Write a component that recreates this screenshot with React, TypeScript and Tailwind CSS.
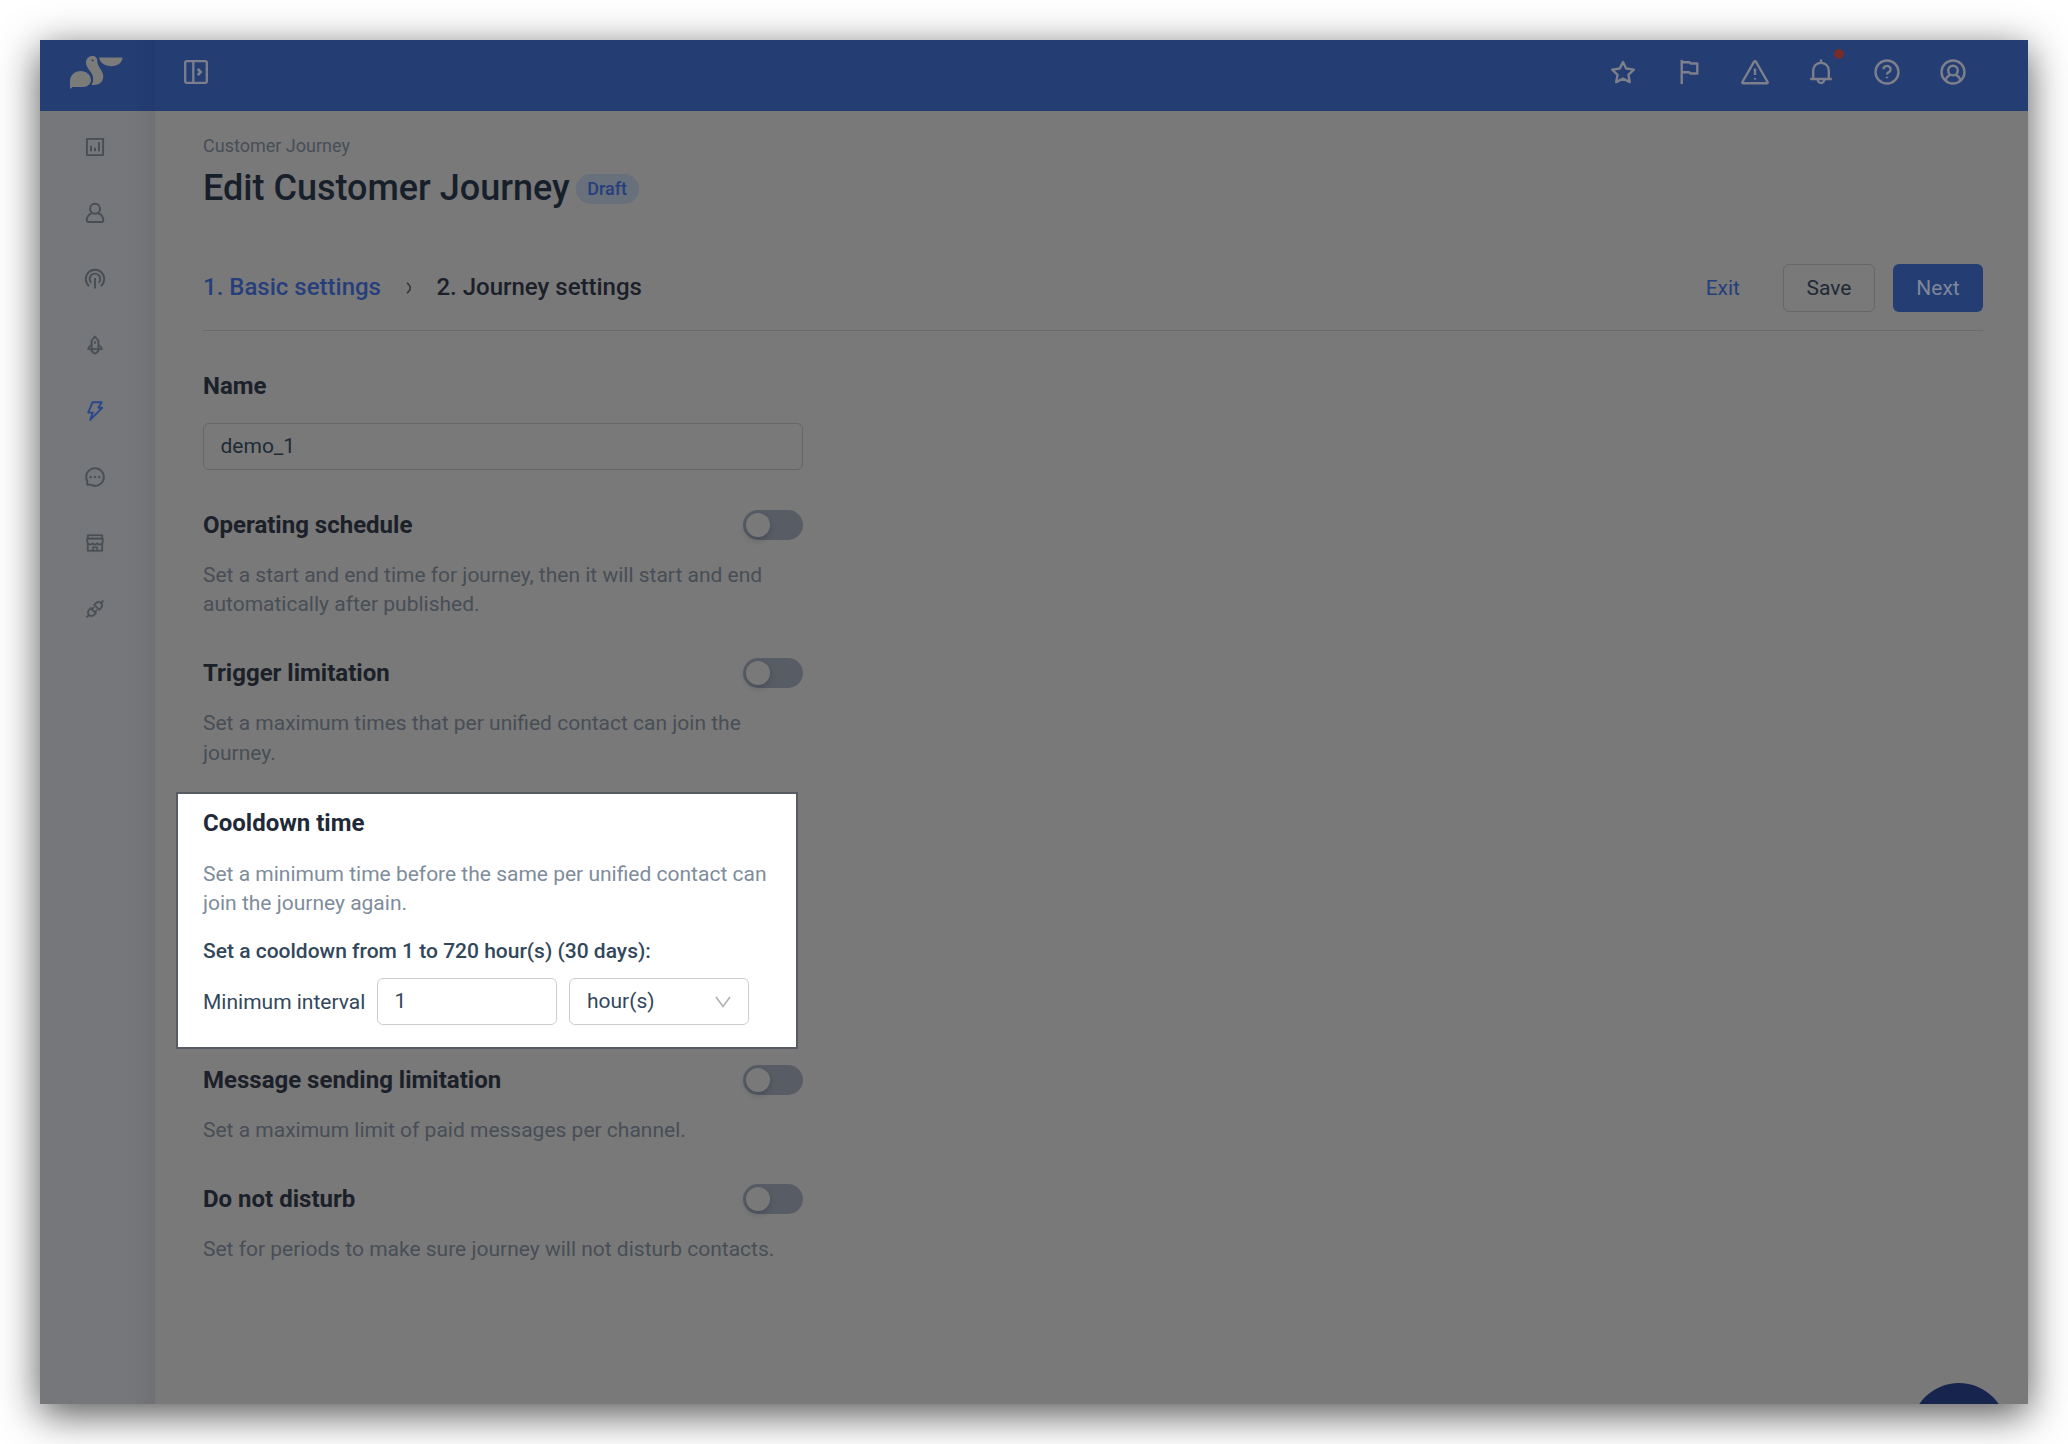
import React, { useState } from 'react';
import {
  AiOutlineRocket,
  AiOutlineThunderbolt,
  AiOutlineMessage,
  AiOutlineShop,
  AiOutlineApi,
} from 'react-icons/ai';

const Logo = () => (
  <svg width="53" height="33" viewBox="0 0 53 33" fill="#7b7b79">
    <path d="M0 33V25C0 19 5 15 10.5 15 16 15 20.5 18.5 21 23.5c.3 4.2-3.5 7.5-8 7.5H2.5z" />
    <path d="M16 6.5C16 2.5 19 0 22.5 0c2.8 0 4.8 1.5 4.8 5 0 6 6 9.5 6 15.5 0 5-4 8.5-9.5 8.5h-2.3c1.5-2.5 1.8-5 1.5-8-.5-5-7-8.5-7-14.5z" />
    <path d="M29 1.5h23.5C52.5 6.5 47.5 10.2 41.5 10.2S29.8 7 29 1.5z" />
    <circle cx="22.6" cy="4.5" r="1" fill="#243d73" />
  </svg>
);

const iconPaths: Record<string, React.ReactNode> = {
  star: <path d="M14 4l3.2 6.5 7.6 1.1-5.4 5.2 1.4 7.3-6.8-3.5-6.8 3.5 1.4-7.3-5.4-5.2 7.6-1.1z" />,
  flag: (
    <>
      <path d="M6.7 1.9v24.2" />
      <path d="M6.7 4.3h7.8l1 1.2h6.8v10h-7l-1-1.2H6.7" />
    </>
  ),
  warning: (
    <>
      <path d="M13.1 3.7L1.4 24a.8.8 0 0 0 .7 1.2h23.8a.8.8 0 0 0 .7-1.2L14.9 3.7a1 1 0 0 0-1.8 0z" />
      <path d="M14 10.5v6.5M14 20v1.6" />
    </>
  ),
  bell: (
    <>
      <path d="M6.2 21v-8.5a7.8 7.8 0 0 1 15.6 0V21M3.2 21h21.6M14 1.5v3" />
      <path d="M10.7 21.5a3.3 3.6 0 0 0 6.6 0" />
    </>
  ),
  help: (
    <>
      <circle cx="14" cy="14" r="11.5" />
      <path d="M10.4 11.2a3.6 3.3 0 1 1 5.4 2.9c-1.3.8-1.8 1.3-1.8 2.5M14 18.7v1.6" />
    </>
  ),
  user: (
    <>
      <circle cx="14" cy="14" r="11.5" />
      <circle cx="14" cy="12.6" r="4.8" />
      <path d="M6.3 22.3c.8-2.5 2.5-4.3 4.7-5.4M21.7 22.3c-.8-2.5-2.5-4.3-4.7-5.4" />
    </>
  ),
};

const HeaderIcon = ({ name }: { name: string }) => (
  <svg width="28" height="28" viewBox="0 0 28 28" fill="none" stroke="#7d808b" strokeWidth="2.4" strokeLinejoin="round">
    {iconPaths[name]}
  </svg>
);

const SideSvg = ({ children }: { children: React.ReactNode }) => (
  <svg width="20" height="20" viewBox="0 0 20 20" fill="none" stroke="currentColor" strokeWidth="1.9" strokeLinejoin="round" className="overflow-visible">
    {children}
  </svg>
);

const sideItems = [
  <SideSvg>
    <rect x="1.9" y="1.9" width="16.2" height="16.2" />
    <path d="M6 14.3V8.7M10 14.3v-3.6M14 14.3v-9" />
  </SideSvg>,
  <SideSvg>
    <circle cx="10" cy="5.8" r="5" />
    <path d="M6.6 10.4C3.5 11.7 1.7 14.4 1.7 17.6c0 1 .5 1.4 1.3 1.4h14c.8 0 1.3-.4 1.3-1.4 0-3.2-1.8-5.9-4.9-7.2" />
  </SideSvg>,
  <SideSvg>
    <path d="M4.2 17.1a9.2 9.2 0 1 1 11.6 0" />
    <path d="M6.3 13.7a5.3 5.3 0 1 1 7.4 0" />
    <path d="M10 9v10.6" />
  </SideSvg>,
  <AiOutlineRocket size={22} strokeWidth={16} />,
  <SideSvg>
    <path d="M7.5 1.3h9.200l-3.400 5.500h3.900L5.200 18.800l2.600-7.200H3.200z" />
  </SideSvg>,
  <AiOutlineMessage size={22} strokeWidth={16} />,
  <AiOutlineShop size={22} strokeWidth={10} />,
  <AiOutlineApi size={22} strokeWidth={16} />,
];

interface SettingProps {
  title: string;
  description: string;
}

function Setting({ title, description }: SettingProps) {
  const [enabled, setEnabled] = useState(false);

  return (
    <section className="w-[600px]">
      <div className="flex h-[30px] items-center justify-between">
        <h2 className="text-[24px] font-bold leading-[30px] text-[#1b2029]">{title}</h2>
        <button
          onClick={() => setEnabled(!enabled)}
          className={`flex h-[30px] w-[60px] items-center rounded-full bg-[#585d65] px-[3px] ${enabled ? 'justify-end' : 'justify-start'}`}
        >
          <span className="h-6 w-6 rounded-full bg-[#797979] shadow-[0_3px_6px_rgba(0,20,40,0.2)]" />
        </button>
      </div>
      <p className="mt-[21px] text-[21px] leading-[29.4px] text-[#484e56]">{description}</p>
    </section>
  );
}

export default function App() {
  const [name, setName] = useState('demo_1');
  const [interval, setInterval] = useState('1');

  return (
    <div className="h-[1444px] w-[2068px] overflow-hidden bg-white p-10 font-[Roboto,sans-serif]">
      <div className="relative flex h-[1364px] w-[1988px] flex-col overflow-hidden bg-[#797979] shadow-[0_10px_38px_rgba(0,0,0,0.68)]">
        <header className="flex h-[71px] shrink-0 items-center bg-[#243d73]">
          <div className="flex h-full w-[115px] items-center bg-linear-to-r from-transparent from-80% to-[#223a6e] pb-[7px] pl-[30px]">
            <Logo />
          </div>
          <svg width="24" height="24" viewBox="0 0 24 24" fill="none" stroke="#7d808b" strokeWidth="2.3" className="mb-[7px] ml-[29px]">
            <rect x="1.2" y="1.2" width="21.6" height="21.6" rx="1.5" />
            <path d="M9.3 1v22" />
            <path d="M13.8 8.8l2.8 3.2-2.8 3.2" strokeWidth="2.8" />
          </svg>
          <div className="ml-auto mr-[61px] flex items-center gap-[38px] pb-[7px]">
            <HeaderIcon name="star" />
            <HeaderIcon name="flag" />
            <HeaderIcon name="warning" />
            <div className="relative">
              <HeaderIcon name="bell" />
              <span className="absolute -top-[9px] left-[27px] h-[10px] w-[10px] rounded-full bg-[#762d29]" />
            </div>
            <HeaderIcon name="help" />
            <HeaderIcon name="user" />
          </div>
        </header>

        <div className="flex min-h-0 flex-1">
          <aside className="flex w-[115px] shrink-0 flex-col bg-[#76777a] bg-linear-to-r from-[#76777a] from-80% to-[#6f7174] pr-[5px] pt-[3px]">
            {sideItems.map((icon, i) => (
              <div
                key={i}
                className={`flex h-[66px] items-center justify-center ${i === 4 ? 'text-[#2b478b]' : 'text-[#484e56]'}`}
              >
                {icon}
              </div>
            ))}
          </aside>

          <main className="flex-1 pl-12 pr-[45px] pt-[21px]">
            <p className="text-[18px] leading-7 text-[#484e56]">Customer Journey</p>
            <div className="mt-[6px] flex h-[44px] items-center">
              <h1 className="text-[36px] font-medium leading-[44px] text-[#17202a]">Edit Customer Journey</h1>
              <span className="ml-[6px] mt-[2px] h-[30px] rounded-full bg-[#67707b] px-[11.5px] text-[18px] font-medium leading-[30px] text-[#263f7c]">
                Draft
              </span>
            </div>

            <div className="mt-[54px] flex h-[67px] items-start border-b border-[#6c6c6d]">
              <div className="flex h-12 items-center text-[24px] font-medium leading-[46px]">
                <span className="pb-[2px] text-[#263f7c]">1. Basic settings</span>
                <svg width="6" height="12" viewBox="0 0 6 12" fill="none" stroke="#30353c" strokeWidth="1.5" className="ml-[25px] mr-[24.5px]">
                  <path d="M1 .8c2 1.8 3.3 3.4 3.3 5.2S3 9.400 1 11.200" />
                </svg>
                <span className="pb-[2px] text-[#1b2029]">2. Journey settings</span>
              </div>
              <div className="ml-auto flex h-12 text-[21px] leading-[46px]">
                <button className="mr-[43px] text-[#263f7c]">Exit</button>
                <button className="mr-[18px] w-[92px] rounded-md border border-[#666768] text-[#202a35]">Save</button>
                <button className="w-[90px] rounded-md bg-[#243d73] text-[#7f8799]">Next</button>
              </div>
            </div>

            <h2 className="mt-10 text-[24px] font-bold leading-[30px] text-[#1b2029]">Name</h2>
            <input
              className="mt-[22px] block h-[47px] w-[600px] rounded-md border border-[#666768] bg-transparent px-[16.5px] pb-[2px] text-[21px] text-[#202a35] outline-none"
              value={name}
              onChange={(e) => setName(e.target.value)}
            />

            <div className="mt-10 flex flex-col gap-[38.6px]">
              <Setting
                title="Operating schedule"
                description="Set a start and end time for journey, then it will start and end automatically after published."
              />
              <Setting
                title="Trigger limitation"
                description="Set a maximum times that per unified contact can join the journey."
              />
            </div>

            <section className="-ml-[27px] mt-[23.8px] h-[257px] w-[622px] border-2 border-[#575c63] bg-white pl-[25px] pr-6 pt-[14px]">
              <h2 className="text-[24px] font-bold leading-[30px] text-[#1f2937]">Cooldown time</h2>
              <p className="mt-[21.6px] text-[21px] leading-[29.4px] text-[#7e8c9b]">
                Set a minimum time before the same per unified contact can join the journey again.
              </p>
              <p className="mt-[18px] text-[21px] font-medium leading-[30px] text-[#33475b]">
                Set a cooldown from 1 to 720 hour(s) (30 days):
              </p>
              <div className="mt-3 flex h-[47px] items-center text-[21px] text-[#33475b]">
                <span className="w-[174px] pt-px">Minimum interval</span>
                <input
                  className="h-[47px] w-[180px] rounded-md border border-[#cdcdd0] px-[16.5px] pb-[2px] outline-none"
                  value={interval}
                  onChange={(e) => setInterval(e.target.value)}
                />
                <div className="ml-3 flex h-[47px] w-[180px] items-center justify-between rounded-md border border-[#cdcdd0] pl-[17px] pr-[17px]">
                  <span className="pb-px">hour(s)</span>
                  <svg width="16" height="12" viewBox="0 0 16 12" fill="none" stroke="#b0b0b2" strokeWidth="1.6">
                    <path d="M1 1l7 9.5L15 1" />
                  </svg>
                </div>
              </div>
            </section>

            <div className="mt-4 flex flex-col gap-[38.6px]">
              <Setting
                title="Message sending limitation"
                description="Set a maximum limit of paid messages per channel."
              />
              <Setting
                title="Do not disturb"
                description="Set for periods to make sure journey will not disturb contacts."
              />
            </div>
          </main>
        </div>

        {/* chat launcher */}
        <span className="absolute left-[1871px] top-[1343px] h-24 w-24 rounded-full bg-[#17244e]" />
      </div>
    </div>
  );
}
